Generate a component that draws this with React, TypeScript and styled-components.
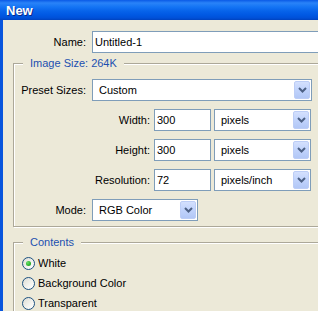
import styled, { createGlobalStyle } from "styled-components";

const GlobalStyle = createGlobalStyle`
  html, body {
    margin: 0;
    padding: 0;
    background: #ece9d8;
  }
  body {
    font-family: "Liberation Sans", Arial, sans-serif;
    font-size: 11px;
    color: #000;
  }
`;

const Window = styled.div`
  width: 318px;
  height: 311px;
  overflow: hidden;
  display: flex;
  flex-direction: column;
  background: #ece9d8;
`;

const TitleBar = styled.div`
  height: 20px;
  flex-shrink: 0;
  display: flex;
  align-items: center;
  padding-left: 6px;
  background: linear-gradient(
    180deg,
    #0a5ae6 0%,
    #2a83f8 15%,
    #1474f4 35%,
    #0763ea 55%,
    #0058e3 75%,
    #0050d8 90%,
    #0042bf 100%
  );
  color: #fff;
  font: bold 13px "Liberation Sans", Arial, sans-serif;
  text-shadow: 1px 1px 0 #0a2a8a;
`;

const Body = styled.div`
  flex: 1;
  border-left: 3px solid #0855dd;
  padding-top: 11px;
  display: flex;
  flex-direction: column;
`;

const Row = styled.div`
  display: flex;
  align-items: center;
  flex-shrink: 0;
  height: 22px;
`;

const Label = styled.label<{ $w: number; $gap?: number }>`
  width: ${(p) => p.$w}px;
  margin-right: ${(p) => p.$gap ?? 6}px;
  flex-shrink: 0;
  text-align: right;
  white-space: nowrap;
`;

const TextField = styled.input<{ $w: number }>`
  width: ${(p) => p.$w}px;
  height: 22px;
  box-sizing: border-box;
  flex-shrink: 0;
  margin: 0;
  padding: 0 2px;
  border: 1px solid #7f9db9;
  background: #fff;
  font: 11px "Liberation Sans", Arial, sans-serif;
  color: #000;
  outline: none;
`;

const Combo = styled.div<{ $w: number; $ml?: number }>`
  width: ${(p) => p.$w}px;
  margin-left: ${(p) => p.$ml ?? 0}px;
  height: 22px;
  box-sizing: border-box;
  flex-shrink: 0;
  display: flex;
  align-items: center;
  border: 1px solid #7f9db9;
  background: #fff;
  padding: 1px;
`;

const ComboText = styled.span`
  flex: 1;
  padding-left: 5px;
  white-space: nowrap;
`;

const ComboButton = styled.span`
  width: 16px;
  height: 18px;
  box-sizing: border-box;
  display: flex;
  align-items: center;
  justify-content: center;
  border: 1px solid #bccdf6;
  border-radius: 2px;
  background: linear-gradient(180deg, #d4e0fd 0%, #c2d4fc 45%, #b2c7f6 100%);
`;

const Group = styled.fieldset<{ $w: number; $mt: number; $pt: number }>`
  width: ${(p) => p.$w}px;
  margin: ${(p) => p.$mt}px 0 0 10px;
  padding: ${(p) => p.$pt}px 0 5px 0;
  flex-shrink: 0;
  border: 1px solid #aca899;
  box-shadow: inset 1px 1px 0 #fff, 1px 1px 0 #fff;
  min-inline-size: 0;
`;

const Legend = styled.legend`
  margin-left: 9px;
  padding: 0 7px;
  line-height: 14px;
  color: #1c50b0;
  background: #ece9d8;
`;

const Fields = styled.div<{ $gap: number }>`
  display: flex;
  flex-direction: column;
  gap: ${(p) => p.$gap}px;
`;

const RadioRow = styled.div`
  display: flex;
  align-items: center;
  height: 20px;
  padding-left: 8px;
`;

const RadioMark = styled.span<{ $on?: boolean }>`
  width: 13px;
  height: 13px;
  box-sizing: border-box;
  margin-right: 3px;
  border-radius: 50%;
  border: 1px solid #1c5180;
  background: linear-gradient(135deg, #dcdcd4 0%, #f4f4f0 60%, #fff 100%);
  display: flex;
  align-items: center;
  justify-content: center;

  &::after {
    content: "";
    display: ${(p) => (p.$on ? "block" : "none")};
    width: 5px;
    height: 5px;
    border-radius: 50%;
    background: radial-gradient(circle at 35% 35%, #6be06b 0%, #2fb52f 55%, #1a8f1a 100%);
  }
`;

const Chevron = () => (
  <svg width="9" height="6" viewBox="0 0 9 6">
    <path d="M1 1 L4.5 4.5 L8 1" fill="none" stroke="#4d6185" strokeWidth="2" />
  </svg>
);

const Select = ({ value, w, ml }: { value: string; w: number; ml?: number }) => (
  <Combo $w={w} $ml={ml}>
    <ComboText>{value}</ComboText>
    <ComboButton>
      <Chevron />
    </ComboButton>
  </Combo>
);

const sizeRows = [
  { label: "Width:", value: "300", unit: "pixels" },
  { label: "Height:", value: "300", unit: "pixels" },
  { label: "Resolution:", value: "72", unit: "pixels/inch" },
];

const contents = ["White", "Background Color", "Transparent"];

export default function App() {
  return (
    <Window>
      <GlobalStyle />
      <TitleBar>New</TitleBar>
      <Body>
        <Row>
          <Label $w={83}>Name:</Label>
          <TextField $w={260} readOnly defaultValue="Untitled-1" />
        </Row>

        <Group $w={340} $mt={3} $pt={9}>
          <Legend>Image Size: 264K</Legend>
          <Fields $gap={8}>
            <Row>
              <Label $w={72}>Preset Sizes:</Label>
              <Select value="Custom" w={220} />
            </Row>
            {sizeRows.map((r) => (
              <Row key={r.label}>
                <Label $w={136} $gap={4}>
                  {r.label}
                </Label>
                <TextField $w={57} readOnly defaultValue={r.value} />
                <Select value={r.unit} w={97} ml={3} />
              </Row>
            ))}
            <Row>
              <Label $w={72}>Mode:</Label>
              <Select value="RGB Color" w={106} />
            </Row>
          </Fields>
        </Group>

        <Group $w={340} $mt={8} $pt={4}>
          <Legend>Contents</Legend>
          <Fields $gap={0}>
            {contents.map((c, i) => (
              <RadioRow key={c}>
                <RadioMark $on={i === 0} />
                {c}
              </RadioRow>
            ))}
          </Fields>
        </Group>
      </Body>
    </Window>
  );
}
